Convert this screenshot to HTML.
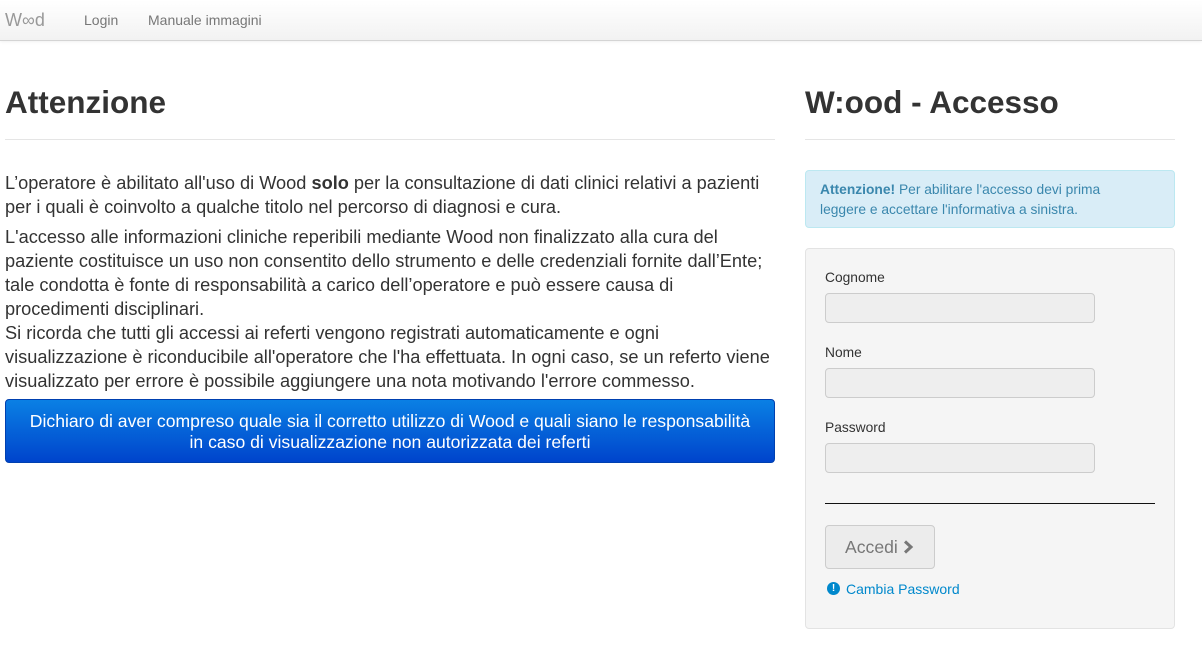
<!DOCTYPE html>
<html><head><meta charset="utf-8"><style>
*{box-sizing:border-box;margin:0;padding:0}
body{width:1202px;height:659px;background:#fff;font-family:"Liberation Sans",sans-serif;color:#333;position:relative;overflow:hidden}
.nav{position:absolute;left:0;top:0;width:1202px;height:41px;background:linear-gradient(#fff,#f2f2f2);border-bottom:1px solid #d4d4d4;box-shadow:0 1px 3px rgba(0,0,0,.06)}
.nav span{position:absolute;top:12px;font-size:14px;color:#777}
.a{position:absolute}
h1{position:absolute;font-size:31.5px;font-weight:bold;color:#333}
.hr{position:absolute;height:1px;background:#e5e5e5}
.p{position:absolute;left:5px;width:790px;font-size:18.2px;line-height:24px;white-space:nowrap}
.btn{position:absolute;left:5px;top:399px;width:770px;height:64px;border-radius:4px;background:linear-gradient(#0a80e4,#0044cc);border:1px solid #0040b0;color:#fff;text-align:center;font-size:17.6px;line-height:21px;padding-top:11px}
.alert{position:absolute;left:805px;top:170px;width:370px;height:58px;background:#d9edf7;border:1px solid #bce8f1;border-radius:4px;color:#3a87ad;font-size:13.8px;line-height:20px;padding:9px 50px 9px 14px}
.well{position:absolute;left:805px;top:248px;width:370px;height:381px;background:#f5f5f5;border:1px solid #e3e3e3;border-radius:4px}
.lbl{position:absolute;left:825px;font-size:13.8px;color:#333}
.inp{position:absolute;left:825px;width:270px;height:30px;background:#eee;border:1px solid #ccc;border-radius:4px}
</style></head><body>
<div class="nav"><span style="left:5px;top:10px;font-size:18px;color:#999">W∞d</span><span style="left:84px">Login</span><span style="left:148px">Manuale immagini</span></div>
<h1 style="left:5px;top:84px">Attenzione</h1>
<div class="hr" style="left:5px;top:139px;width:770px"></div>
<div class="p" style="top:171px">L’operatore è abilitato all'uso di Wood <b>solo</b> per la consultazione di dati clinici relativi a pazienti<br>per i quali è coinvolto a qualche titolo nel percorso di diagnosi e cura.</div>
<div class="p" style="top:225px">L'accesso alle informazioni cliniche reperibili mediante Wood non finalizzato alla cura del<br>paziente costituisce un uso non consentito dello strumento e delle credenziali fornite dall’Ente;<br>tale condotta è fonte di responsabilità a carico dell’operatore e può essere causa di<br>procedimenti disciplinari.</div>
<div class="p" style="top:321px">Si ricorda che tutti gli accessi ai referti vengono registrati automaticamente e ogni<br>visualizzazione è riconducibile all'operatore che l'ha effettuata. In ogni caso, se un referto viene<br>visualizzato per errore è possibile aggiungere una nota motivando l'errore commesso.</div>
<div class="btn">Dichiaro di aver compreso quale sia il corretto utilizzo di Wood e quali siano le responsabilità<br>in caso di visualizzazione non autorizzata dei referti</div>
<h1 style="left:805px;top:84px">W:ood - Accesso</h1>
<div class="hr" style="left:805px;top:139px;width:370px"></div>
<div class="alert"><b>Attenzione!</b> Per abilitare l'accesso devi prima leggere e accettare l'informativa a sinistra.</div>
<div class="well"></div>
<div class="lbl" style="top:270px">Cognome</div><div class="inp" style="top:293px"></div>
<div class="lbl" style="top:345px">Nome</div><div class="inp" style="top:368px"></div>
<div class="lbl" style="top:420px">Password</div><div class="inp" style="top:443px"></div>
<div class="a" style="left:825px;top:503px;width:330px;height:1px;background:#111"></div>
<div class="a" style="left:825px;top:525px;width:110px;height:44px;background:#ececec;border:1px solid #ccc;border-radius:4px;color:#777;font-size:17.6px;line-height:42px;padding-left:19px">Accedi <svg width="11" height="14" viewBox="0 0 11 14" style="vertical-align:-1px"><path d="M2 1.5l6 5.5-6 5.5" fill="none" stroke="#777" stroke-width="3"/></svg></div>
<div class="a" style="left:827px;top:582px;width:13px;height:13px;border-radius:50%;background:#0088cc;color:#fff;font-size:10px;font-weight:bold;text-align:center;line-height:13px">!</div>
<div class="a" style="left:846px;top:581px;font-size:14px;color:#0088cc">Cambia Password</div>
</body></html>
